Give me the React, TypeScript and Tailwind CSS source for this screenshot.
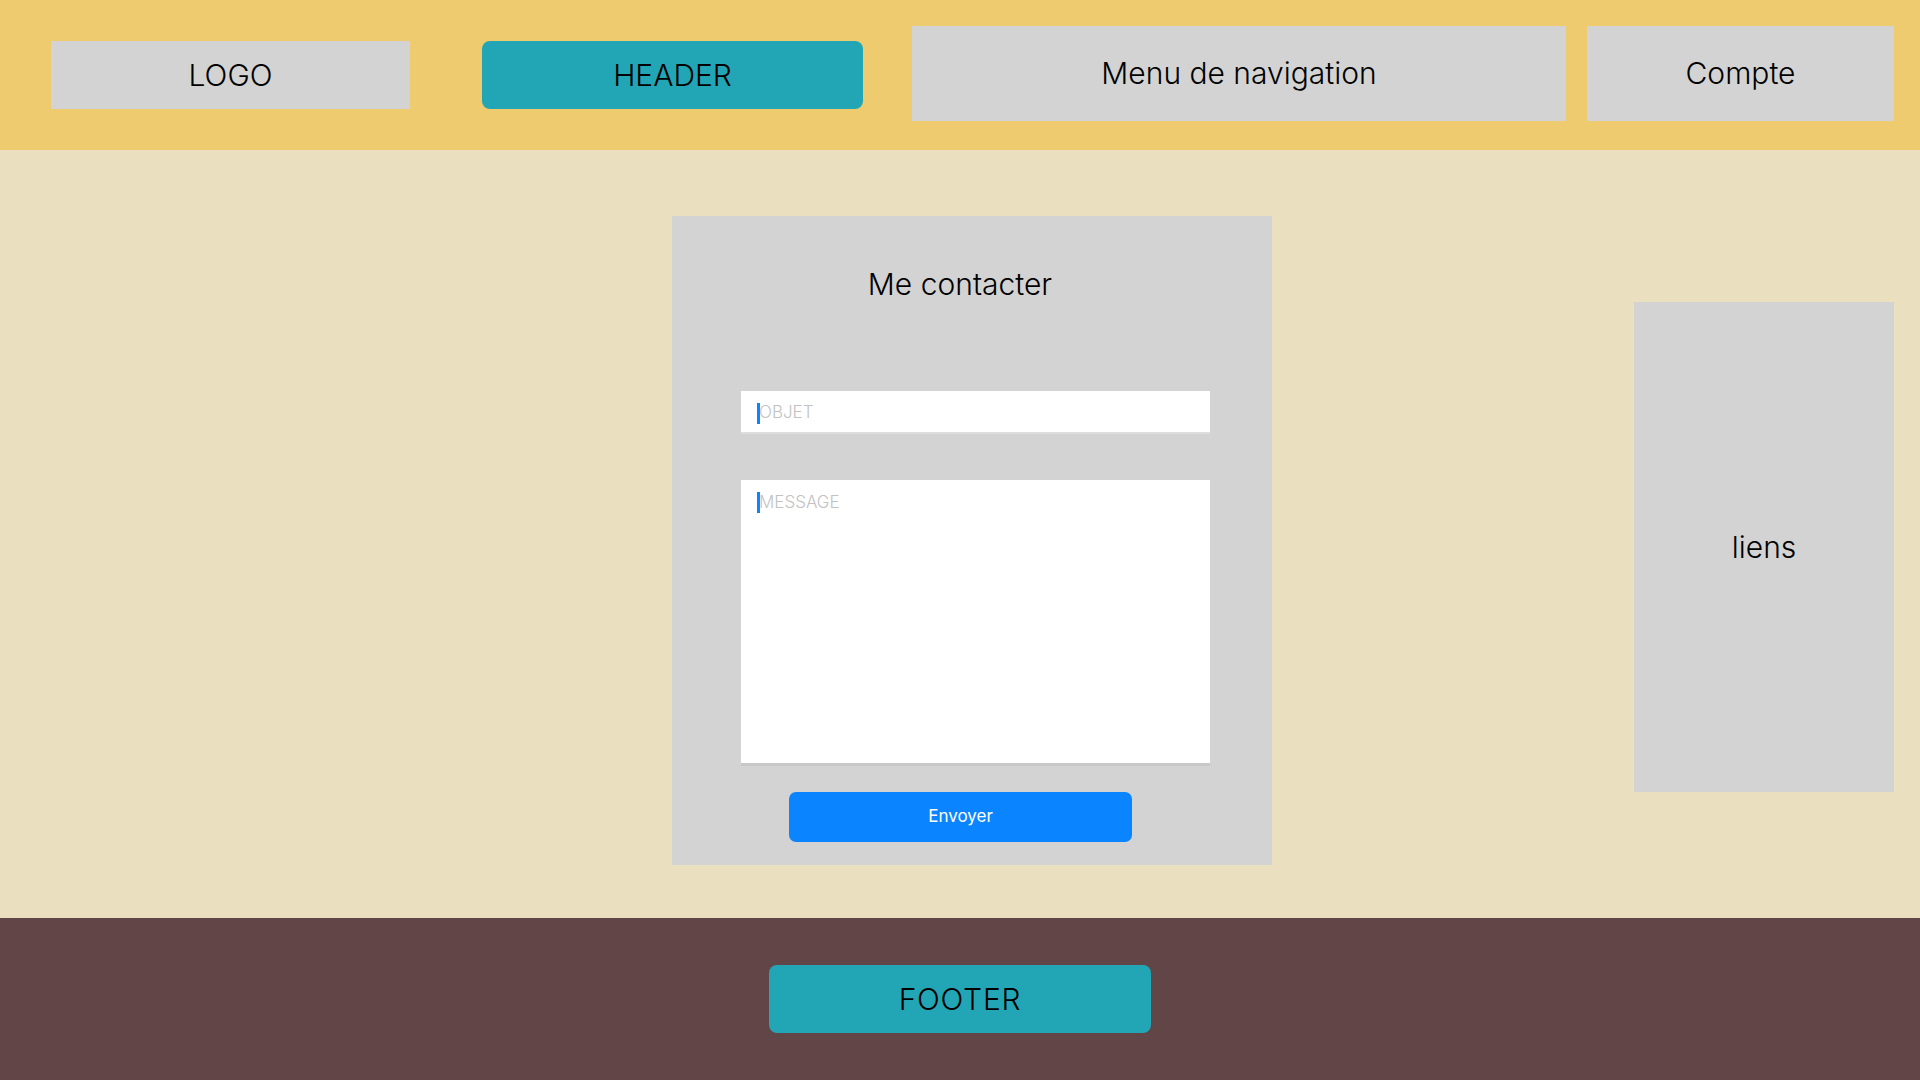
import React from "react";

const font = { fontFamily: "Inter, 'Noto Sans', sans-serif" };

export default function App() {
  return (
    <div className="flex h-[1080px] w-[1920px] flex-col overflow-hidden text-black" style={font}>
      {/* Header */}
      <header className="flex h-[150px] shrink-0 items-start bg-[#edcb6e] text-[30px] font-light">
        <div className="ml-[51px] mt-[41px] flex h-[68px] w-[359px] items-center justify-center bg-[#d3d3d3]">
          LOGO
        </div>
        <div className="ml-[72px] mt-[41px] flex h-[68px] w-[381px] items-center justify-center rounded-[8px] bg-[#22a6b5]">
          HEADER
        </div>
        <div className="ml-[49px] mt-[26px] flex h-[95px] w-[654px] items-center justify-center bg-[#d3d3d3]">
          Menu de navigation
        </div>
        <div className="ml-[21px] mt-[26px] flex h-[95px] w-[307px] items-center justify-center bg-[#d3d3d3]">
          Compte
        </div>
      </header>

      {/* Main */}
      <main className="flex h-[768px] shrink-0 items-start bg-[#eae0c0]">
        <div className="ml-[672px] mt-[66px] flex h-[649px] w-[600px] flex-col bg-[#d3d3d3] pt-[50px]">
          <h1 className="pr-[24px] text-center text-[30px] leading-[36px] font-light">Me contacter</h1>

          <div className="relative ml-[69px] mt-[89px] flex h-[43px] w-[469px] items-center border-b-2 border-[#dedede] bg-white pt-[3px]">
            <span className="absolute left-[16px] top-[12px] h-[21px] w-[3px] bg-[#0a84ff]" />
            <span className="pl-[18px] text-[17px] font-light text-[#c2c2c2]">OBJET</span>
          </div>

          <div className="relative ml-[69px] mt-[46px] h-[286px] w-[469px] border-b-[3px] border-[#c8c8c8] bg-white pt-[11px]">
            <span className="absolute left-[16px] top-[12px] h-[21px] w-[3px] bg-[#0a84ff]" />
            <span className="block pl-[18px] text-[17px] leading-[22px] font-light text-[#c2c2c2]">MESSAGE</span>
          </div>

          <button className="ml-[117px] mt-[26px] flex h-[50px] w-[343px] items-center justify-center rounded-[7px] bg-[#0b85ff] text-[17px] font-normal text-white">
            Envoyer
          </button>
        </div>

        <div className="ml-auto mr-[26px] mt-[152px] flex h-[490px] w-[260px] items-center justify-center bg-[#d3d3d3] text-[30px] font-light">
          liens
        </div>
      </main>

      {/* Footer */}
      <footer className="flex flex-1 items-center justify-center bg-[#614547]">
        <div className="flex h-[68px] w-[382px] items-center justify-center rounded-[8px] bg-[#22a6b5] text-[30px] font-light tracking-wide">
          FOOTER
        </div>
      </footer>
    </div>
  );
}
